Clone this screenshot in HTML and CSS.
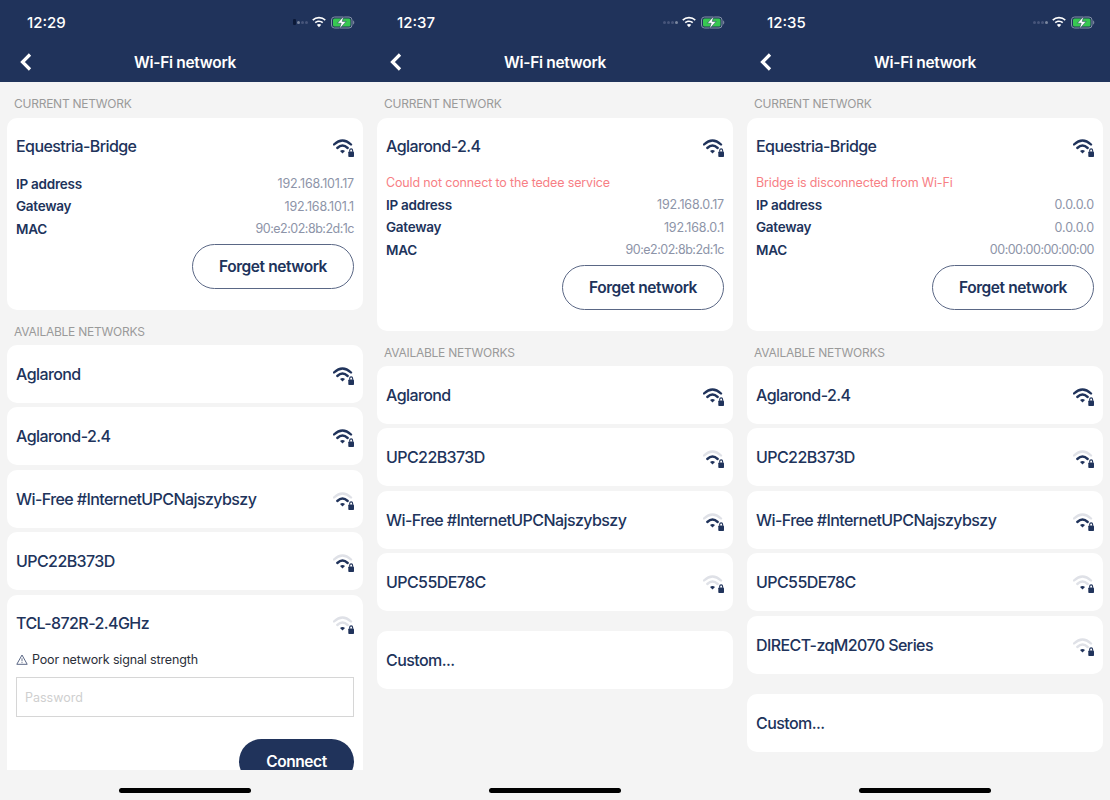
FILE: index.html
```html
<!DOCTYPE html>
<html lang="en">
<head>
<meta charset="utf-8">
<title>Wi-Fi network</title>
<link rel="stylesheet" href="styles.css">
</head>
<body>
<svg class="defs" width="0" height="0" aria-hidden="true">
  <symbol id="wifi-lock" viewBox="0 0 21 19">
    <path class="arc-o" d="M1 6.500Q9.500-1.500 18 6.500" fill="none" stroke-width="2.400" stroke-linecap="round"/>
    <path class="arc-m" d="M4.300 10Q9.500 5.200 14.700 10" fill="none" stroke-width="2.400" stroke-linecap="round"/>
    <path class="arc-i" d="M7 13Q9.500 11.200 12 13L9.500 15.500Z"/>
    <rect class="lock" x="15.300" y="13.500" width="5.700" height="5.500" rx=".8"/>
    <path class="shackle" d="M16.700 13.700v-1.400a1.450 1.450 0 0 1 2.900 0v1.400" fill="none" stroke-width="1.100"/>
  </symbol>
  <symbol id="status-wifi" viewBox="0 0 16 12">
    <path d="M8 2.600c2.200 0 4.200.8 5.700 2.200l1.100-1.200A10 10 0 0 0 8 .8 10 10 0 0 0 1.200 3.600l1.100 1.200A8.300 8.300 0 0 1 8 2.600z"/>
    <path d="M8 6.100c1.200 0 2.300.4 3.200 1.200l1.100-1.200A6.400 6.400 0 0 0 8 4.400c-1.600 0-3.100.6-4.300 1.700l1.100 1.200c.9-.8 2-1.200 3.200-1.200z"/>
    <path d="M8 8c-.9 0-1.600.3-2.200.8L8 11.200l2.200-2.400C9.600 8.300 8.900 8 8 8z"/>
  </symbol>
  <symbol id="status-battery" viewBox="0 0 24 13">
    <rect x=".5" y="1" width="20.500" height="11" rx="3" fill="none" stroke="#8391a8"/>
    <rect x="2" y="2.500" width="17.500" height="8" rx="1.500" fill="#37c751"/>
    <path d="M22 4.500v4c.8-.2 1.300-1 1.300-2s-.5-1.800-1.300-2z" fill="#76839c"/>
    <path d="M12.900 0 6.400 7.200h3.800L8.400 13l6.700-7.600h-3.900z" fill="#fff" stroke="#20335b" stroke-width=".5"/>
  </symbol>
</svg>

<main class="phones">

  <section class="phone">
    <header class="topbar">
      <div class="status">
        <span class="time">12:29</span>
        <span class="status-right">
          <span class="dots"><i class="dot dot-a"></i><i class="dot dot-b"></i><i class="dot dot-c"></i><i class="dot dot-c"></i></span>
          <svg class="s-wifi"><use href="#status-wifi"/></svg>
          <svg class="s-batt"><use href="#status-battery"/></svg>
        </span>
      </div>
      <div class="nav">
        <svg class="back" viewBox="0 0 12 18"><path d="M10 1.500 2.500 9l7.500 7.500" fill="none" stroke="#fff" stroke-width="3.200"/></svg>
        <h1 class="title">Wi-Fi network</h1>
      </div>
    </header>
    <div class="scroll">
      <h2 class="label">CURRENT NETWORK</h2>
      <div class="card current">
        <div class="row-name"><span class="name">Equestria-Bridge</span><svg class="sig sig-3"><use href="#wifi-lock"/></svg></div>
        <div class="kv"><span class="k">IP address</span><span class="v">192.168.101.17</span></div>
        <div class="kv"><span class="k">Gateway</span><span class="v">192.168.101.1</span></div>
        <div class="kv"><span class="k">MAC</span><span class="v mac">90:e2:02:8b:2d:1c</span></div>
        <div class="actions"><button class="btn btn-outline">Forget network</button></div>
      </div>
      <h2 class="label">AVAILABLE NETWORKS</h2>
      <div class="card net"><span class="name">Aglarond</span><svg class="sig sig-3"><use href="#wifi-lock"/></svg></div>
      <div class="card net"><span class="name">Aglarond-2.4</span><svg class="sig sig-3"><use href="#wifi-lock"/></svg></div>
      <div class="card net"><span class="name">Wi-Free #InternetUPCNajszybszy</span><svg class="sig sig-2"><use href="#wifi-lock"/></svg></div>
      <div class="card net"><span class="name">UPC22B373D</span><svg class="sig sig-2"><use href="#wifi-lock"/></svg></div>
      <div class="card expanded">
        <div class="row-name"><span class="name">TCL-872R-2.4GHz</span><svg class="sig sig-1"><use href="#wifi-lock"/></svg></div>
        <p class="warn"><svg class="warn-icon" viewBox="0 0 12 11"><path d="M6 1 11.200 10.300H.8z" fill="none" stroke="#5a6785" stroke-width="1"/><path d="M6 4.300v3M6 8.100v1" stroke="#5a6785" stroke-width=".9"/></svg>Poor network signal strength</p>
        <input class="pass" type="text" placeholder="Password">
        <div class="actions connect-row"><button class="btn btn-solid">Connect</button></div>
      </div>
    </div>
    <div class="home"><span class="home-bar"></span></div>
  </section>

  <section class="phone">
    <header class="topbar">
      <div class="status">
        <span class="time">12:37</span>
        <span class="status-right">
          <span class="dots"><i class="dot dot-c"></i><i class="dot dot-c"></i><i class="dot dot-c"></i><i class="dot dot-b"></i></span>
          <svg class="s-wifi"><use href="#status-wifi"/></svg>
          <svg class="s-batt"><use href="#status-battery"/></svg>
        </span>
      </div>
      <div class="nav">
        <svg class="back" viewBox="0 0 12 18"><path d="M10 1.500 2.500 9l7.500 7.500" fill="none" stroke="#fff" stroke-width="3.200"/></svg>
        <h1 class="title">Wi-Fi network</h1>
      </div>
    </header>
    <div class="scroll">
      <h2 class="label">CURRENT NETWORK</h2>
      <div class="card current">
        <div class="row-name"><span class="name">Aglarond-2.4</span><svg class="sig sig-3"><use href="#wifi-lock"/></svg></div>
        <p class="error">Could not connect to the tedee service</p>
        <div class="kv"><span class="k">IP address</span><span class="v">192.168.0.17</span></div>
        <div class="kv"><span class="k">Gateway</span><span class="v">192.168.0.1</span></div>
        <div class="kv"><span class="k">MAC</span><span class="v mac">90:e2:02:8b:2d:1c</span></div>
        <div class="actions"><button class="btn btn-outline">Forget network</button></div>
      </div>
      <h2 class="label">AVAILABLE NETWORKS</h2>
      <div class="card net"><span class="name">Aglarond</span><svg class="sig sig-3"><use href="#wifi-lock"/></svg></div>
      <div class="card net"><span class="name">UPC22B373D</span><svg class="sig sig-2"><use href="#wifi-lock"/></svg></div>
      <div class="card net"><span class="name">Wi-Free #InternetUPCNajszybszy</span><svg class="sig sig-2"><use href="#wifi-lock"/></svg></div>
      <div class="card net"><span class="name">UPC55DE78C</span><svg class="sig sig-1"><use href="#wifi-lock"/></svg></div>
      <div class="card net custom"><span class="name">Custom...</span></div>
    </div>
    <div class="home"><span class="home-bar"></span></div>
  </section>

  <section class="phone">
    <header class="topbar">
      <div class="status">
        <span class="time">12:35</span>
        <span class="status-right">
          <span class="dots"><i class="dot dot-c"></i><i class="dot dot-c"></i><i class="dot dot-c"></i><i class="dot dot-b"></i></span>
          <svg class="s-wifi"><use href="#status-wifi"/></svg>
          <svg class="s-batt"><use href="#status-battery"/></svg>
        </span>
      </div>
      <div class="nav">
        <svg class="back" viewBox="0 0 12 18"><path d="M10 1.500 2.500 9l7.500 7.500" fill="none" stroke="#fff" stroke-width="3.200"/></svg>
        <h1 class="title">Wi-Fi network</h1>
      </div>
    </header>
    <div class="scroll">
      <h2 class="label">CURRENT NETWORK</h2>
      <div class="card current">
        <div class="row-name"><span class="name">Equestria-Bridge</span><svg class="sig sig-3"><use href="#wifi-lock"/></svg></div>
        <p class="error">Bridge is disconnected from Wi-Fi</p>
        <div class="kv"><span class="k">IP address</span><span class="v">0.0.0.0</span></div>
        <div class="kv"><span class="k">Gateway</span><span class="v">0.0.0.0</span></div>
        <div class="kv"><span class="k">MAC</span><span class="v mac">00:00:00:00:00:00</span></div>
        <div class="actions"><button class="btn btn-outline">Forget network</button></div>
      </div>
      <h2 class="label">AVAILABLE NETWORKS</h2>
      <div class="card net"><span class="name">Aglarond-2.4</span><svg class="sig sig-3"><use href="#wifi-lock"/></svg></div>
      <div class="card net"><span class="name">UPC22B373D</span><svg class="sig sig-2"><use href="#wifi-lock"/></svg></div>
      <div class="card net"><span class="name">Wi-Free #InternetUPCNajszybszy</span><svg class="sig sig-2"><use href="#wifi-lock"/></svg></div>
      <div class="card net"><span class="name">UPC55DE78C</span><svg class="sig sig-1"><use href="#wifi-lock"/></svg></div>
      <div class="card net"><span class="name">DIRECT-zqM2070 Series</span><svg class="sig sig-1"><use href="#wifi-lock"/></svg></div>
      <div class="card net custom"><span class="name">Custom...</span></div>
    </div>
    <div class="home"><span class="home-bar"></span></div>
  </section>

</main>
</body>
</html>
```

FILE: styles.css
```css
* { box-sizing: border-box; }

html, body {
  margin: 0;
  padding: 0;
  background: #f4f4f4;
}

body {
  font-family: Inter, "Liberation Sans", sans-serif;
  color: #20335b;
  overflow: hidden;
}

.defs { display: block; height: 0; }

.phones {
  display: flex;
  width: 1110px;
  height: 800px;
}

.phone {
  width: 370px;
  height: 800px;
  display: flex;
  flex-direction: column;
  background: #f4f4f4;
}

.topbar {
  height: 82px;
  flex: none;
  background: #20335b;
  color: #fff;
}

.status {
  height: 43px;
  display: flex;
  align-items: center;
  justify-content: space-between;
  padding: 1px 15px 0 27px;
}

.time {
  font-size: 15px;
  font-weight: 500;
}

.status-right {
  display: flex;
  align-items: center;
}

.dots {
  display: flex;
  gap: 1px;
  margin-right: 3px;
  align-items: center;
}

.dot {
  width: 3px;
  height: 3px;
  border-radius: 50%;
  background: #4b5a7a;
}

.dot-a { height: 6px; background: #0c1a38; border-radius: 1px; }
.dot-b { background: #7b879f; }
.dot-c { background: #47557a; }

.s-wifi {
  width: 16px;
  height: 12px;
  fill: #fff;
  margin-right: 4px;
}

.s-batt {
  width: 24px;
  height: 13px;
}

.nav {
  height: 39px;
  position: relative;
  display: flex;
  align-items: center;
  justify-content: center;
  padding-top: 1px;
}

.back {
  position: absolute;
  left: 20px;
  top: 10px;
  width: 12px;
  height: 18px;
}

.title {
  margin: 0;
  font-size: 15.500px;
  font-weight: 600;
  letter-spacing: -.3px;
  line-height: 20px;
}

.scroll {
  height: 688px;
  flex: none;
  overflow: hidden;
  padding: 0 7px;
}

.label {
  margin: 0;
  height: 35.500px;
  padding: 13px 7px 0;
  font-size: 12px;
  letter-spacing: -.25px;
  line-height: 17px;
  font-weight: 400;
  color: #9a9a9a;
}

.card {
  background: #fff;
  border-radius: 10px;
  padding: 0 9px;
}

.current { padding-bottom: 21px; }

.row-name {
  height: 54px;
  display: flex;
  align-items: center;
  justify-content: space-between;
  padding-top: 3px;
}

.name {
  font-size: 16px;
  font-weight: 500;
  letter-spacing: -.58px;
  line-height: 22px;
}

.sig {
  width: 21px;
  height: 19px;
  flex: none;
  position: relative;
  top: 1.500px;
}

.arc-i, .lock { fill: #20335b; }
.shackle { stroke: #20335b; }
.sig-3 { --o: #20335b; --m: #20335b; }
.sig-2 { --o: #dfe1e7; --m: #20335b; }
.sig-1 { --o: #dfe1e7; --m: #dfe1e7; }
.arc-o { stroke: var(--o); }
.arc-m { stroke: var(--m); }

.error {
  margin: 0;
  height: 21px;
  font-size: 12.500px;
  letter-spacing: -.15px;
  line-height: 21px;
  color: #f78085;
}

.kv {
  height: 22.700px;
  display: flex;
  align-items: center;
  justify-content: space-between;
  padding-top: 1.500px;
}

.k {
  font-size: 13.500px;
  font-weight: 600;
  letter-spacing: -.25px;
}

.v {
  font-size: 12.500px;
  font-weight: 400;
  letter-spacing: -.15px;
  color: #8d94a8;
}

.mac { letter-spacing: -.5px; }

.actions {
  display: flex;
  justify-content: flex-end;
  margin-top: 4px;
}

.btn {
  height: 45px;
  border-radius: 23px;
  font-family: inherit;
  font-size: 15.500px;
  font-weight: 600;
  letter-spacing: -.42px;
  padding: 1px 0 0;
}

.btn-outline {
  width: 162px;
  background: #fff;
  color: #20335b;
  border: 1px solid #5a6785;
}

.btn-solid {
  width: 115px;
  background: #20335b;
  color: #fff;
  border: 0;
}

.net {
  height: 58px;
  margin-bottom: 4.400px;
  display: flex;
  align-items: center;
  justify-content: space-between;
}

.custom { margin-top: 20px; }

.warn {
  margin: 0;
  height: 20px;
  display: flex;
  align-items: center;
  gap: 4px;
  font-size: 12.500px;
  letter-spacing: -.15px;
  color: #2b2f3a;
  padding-top: 1px;
}

.warn-icon {
  width: 12px;
  height: 11px;
  flex: none;
}

.pass {
  display: block;
  width: 100%;
  height: 40px;
  margin-top: 8px;
  border: 1px solid #d6d6d6;
  padding: 1px 8px 0;
  font-family: inherit;
  font-size: 12.500px;
  background: #fff;
  border-radius: 0;
}

.pass::placeholder { color: #cfcfcf; opacity: 1; }

.connect-row { margin-top: 22px; }

.home {
  flex: 1;
  display: flex;
  justify-content: center;
  padding-top: 18px;
}

.home-bar {
  width: 132px;
  height: 4.500px;
  border-radius: 3px;
  background: #000;
}
```
